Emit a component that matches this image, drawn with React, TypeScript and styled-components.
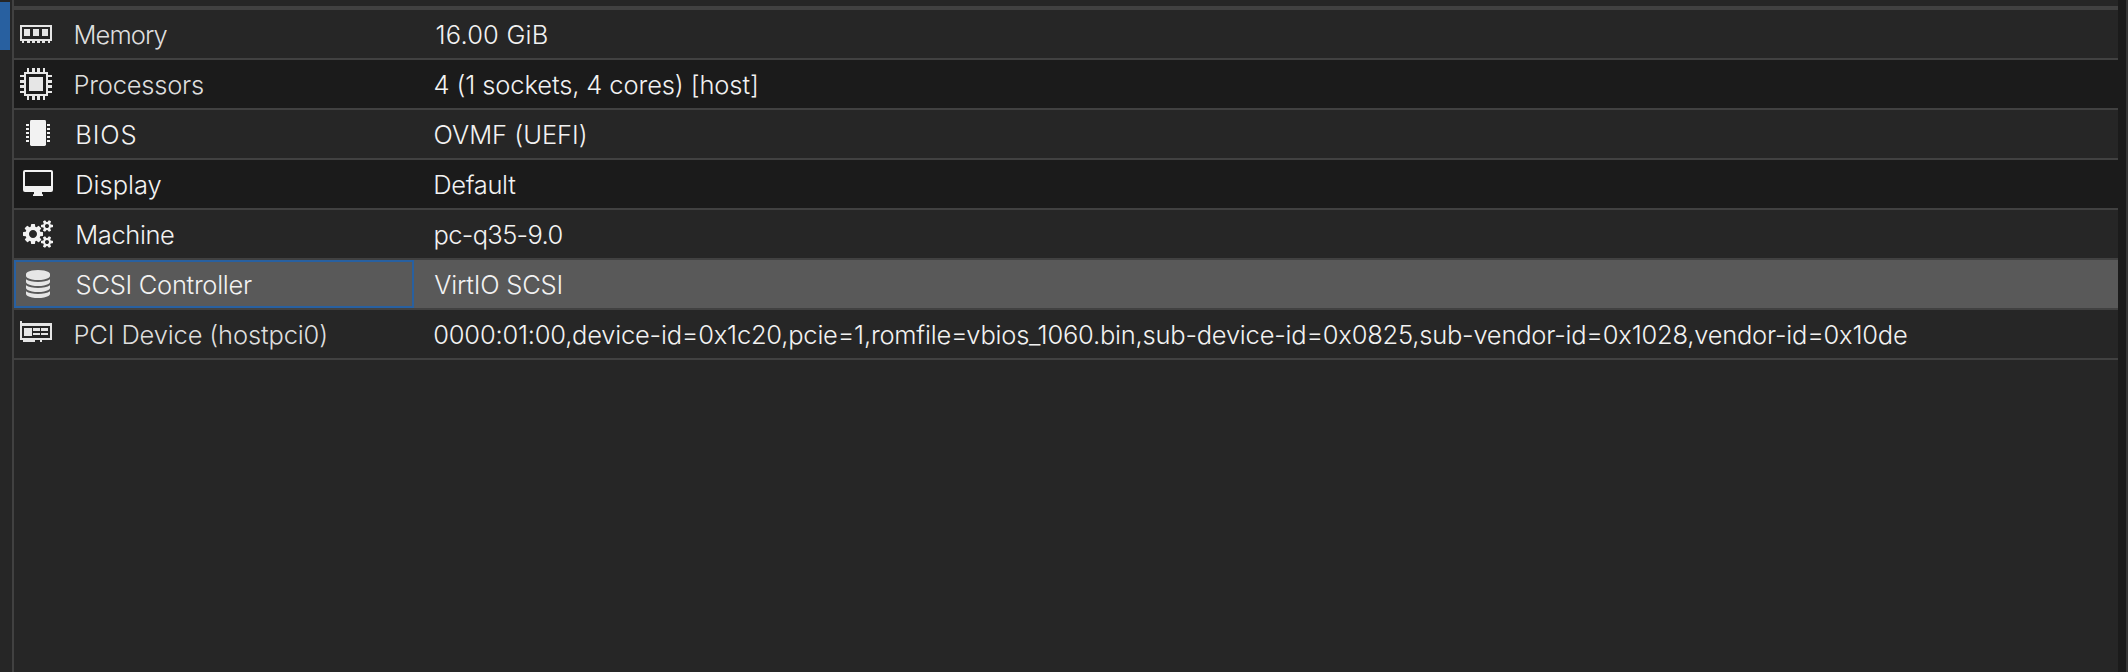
import React from 'react';
import styled, { createGlobalStyle } from 'styled-components';

const GlobalStyle = createGlobalStyle`
  * { box-sizing: border-box; }
  body {
    margin: 0;
    overflow: hidden;
    background: #262626;
    font-family: Inter, 'Liberation Sans', sans-serif;
  }
`;

const Screen = styled.div`
  display: flex;
  width: 2128px;
  height: 672px;
  background: #262626;
`;

const NavStrip = styled.div`
  flex: none;
  width: 12px;
  padding-top: 2px;
`;

const NavSelection = styled.div`
  width: 10px;
  height: 48px;
  background: #2860a0;
`;

const HardwarePanel = styled.main`
  flex: none;
  width: 2106px;
  border-left: 2px solid #414141;
`;

const HeaderEdge = styled.div`
  height: 10px;
  border-bottom: 4px solid #414141;
`;

const Gutter = styled.div`
  flex: 1;
  background: #1b1b1b;
  border-right: 2px solid #363636;
`;

const Row = styled.div<{ $tone: 'plain' | 'alt' | 'selected' }>`
  display: flex;
  height: 50px;
  border-bottom: 2px solid #414141;
  background: ${({ $tone }) =>
    $tone === 'selected' ? '#595959' : $tone === 'alt' ? '#1b1b1b' : '#262626'};
`;

const LabelCell = styled.div<{ $focused: boolean }>`
  display: flex;
  flex: none;
  width: 400px;
  height: 48px;
  box-shadow: ${({ $focused }) => ($focused ? 'inset 0 0 0 2px #2860a0' : 'none')};
`;

const IconBox = styled.svg<{ $bright: boolean }>`
  display: block;
  flex: none;
  width: 48px;
  height: 48px;
  fill: ${({ $bright }) => ($bright ? '#f2f2f2' : '#e6e6e6')};
`;

const Text = styled.span<{ $start: number; $track: number; $color: string }>`
  padding-top: 1px;
  padding-left: ${({ $start }) => $start}px;
  font-size: 25.5px;
  font-weight: 300;
  line-height: 48px;
  letter-spacing: ${({ $track }) => $track}px;
  font-feature-settings: 'calt' 0;
  white-space: nowrap;
  color: ${({ $color }) => $color};
`;

const MemoryIcon = (
  <g>
    <path fillRule="evenodd" d="M6 15h32v16H6zM8 17v12h28V17z" />
    <path d="M10 19h6v7h-6zM19 19h6v7h-6zM28 19h6v7h-6z" />
    <path d="M8 31h2v2H8zM13 31h3v2h-3zM18 31h3v2h-3zM23 31h3v2h-3zM28 31h3v2h-3zM34 31h2v2h-2z" />
  </g>
);

const CpuIcon = (
  <g>
    <path fillRule="evenodd" d="M10 12h24v24H10zM12 14v20h20V14z" />
    <path d="M15 17h14v14H15z" />
    <path d="M13 8h2v4h-2zM18 8h3v4h-3zM23 8h3v4h-3zM29 8h2v4h-2zM13 36h2v4h-2zM18 36h3v4h-3zM23 36h3v4h-3zM29 36h2v4h-2z" />
    <path d="M6 15h4v2H6zM6 20h4v3H6zM6 25h4v3H6zM6 31h4v2H6zM34 15h4v2h-4zM34 20h4v3h-4zM34 25h4v3h-4zM34 31h4v2h-4z" />
  </g>
);

const ChipIcon = (
  <g>
    <rect x="16" y="10" width="16" height="26" rx="1.4" />
    <path d="M12 14h3v2h-3zM12 18h3v2h-3zM12 22h3v2h-3zM12 26h3v2h-3zM12 30h3v2h-3zM33 14h3v2h-3zM33 18h3v2h-3zM33 22h3v2h-3zM33 26h3v2h-3zM33 30h3v2h-3z" />
  </g>
);

const DisplayIcon = (
  <path
    fillRule="evenodd"
    d="M11 10h26a2 2 0 0 1 2 2v18a2 2 0 0 1-2 2h-9v2l1 .6V36H19v-1.4l1-.6v-2h-9a2 2 0 0 1-2-2V12a2 2 0 0 1 2-2zM11 12v14h26V12z"
  />
);

const CogsIcon = (
  <path
    transform="translate(9 10) scale(.015625)"
    d="M896 896q0-106-75-181t-181-75-181 75-75 181 75 181 181 75 181-75 75-181zm768 512q0-52-38-90t-90-38-90 38-38 90q0 53 37.5 90.5t90.5 37.5 90.5-37.5 37.5-90.5zm0-1024q0-52-38-90t-90-38-90 38-38 90q0 53 37.5 90.5t90.5 37.5 90.5-37.5 37.5-90.5zm-384 421v185q0 10-7 19.5t-16 10.5l-155 24q-11 35-32 76 34 48 90 115 7 11 7 20 0 12-7 19-23 30-82.5 89.5t-78.5 59.5q-11 0-21-7l-115-90q-37 19-77 31-11 108-23 155-7 24-30 24h-186q-11 0-20-7.5t-10-17.5l-23-153q-34-10-75-31l-118 89q-7 7-20 7-11 0-21-8-144-133-144-160 0-9 7-19 10-14 41-53t47-61q-23-44-35-82l-152-24q-10-1-17-9.5t-7-19.5v-185q0-10 7-19.5t16-10.5l155-24q11-35 32-76-34-48-90-115-7-11-7-20 0-12 7-20 22-30 82-89t79-59q11 0 21 7l115 90q34-18 77-32 11-108 23-154 7-24 30-24h186q11 0 20 7.5t10 17.5l23 153q34 10 75 31l118-89q8-7 20-7 11 0 21 8 144 133 144 160 0 8-7 19-12 16-42 54t-45 60q23 48 34 82l152 23q10 2 17 10.5t7 19.5zm640 533v140q0 16-149 31-12 27-30 52 51 113 51 138 0 4-4 7-122 71-124 71-8 0-46-47t-52-68q-20 2-30 2t-30-2q-14 21-52 68t-46 47q-2 0-124-71-4-3-4-7 0-25 51-138-18-25-30-52-149-15-149-31v-140q0-16 149-31 13-29 30-52-51-113-51-138 0-4 4-7 4-2 35-20t59-34 30-16q8 0 46 46.5t52 67.5q20-2 30-2t30 2q51-71 92-112l6-2q4 0 124 70 4 3 4 7 0 25-51 138 17 23 30 52 149 15 149 31zm0-1024v140q0 16-149 31-12 27-30 52 51 113 51 138 0 4-4 7-122 71-124 71-8 0-46-47t-52-68q-20 2-30 2t-30-2q-14 21-52 68t-46 47q-2 0-124-71-4-3-4-7 0-25 51-138-18-25-30-52-149-15-149-31v-140q0-16 149-31 13-29 30-52-51-113-51-138 0-4 4-7 4-2 35-20t59-34 30-16q8 0 46 46.5t52 67.5q20-2 30-2t30 2q51-71 92-112l6-2q4 0 124 70 4 3 4 7 0 25-51 138 17 23 30 52 149 15 149 31z"
  />
);

const DatabaseIcon = (
  <path
    transform="translate(10 10) scale(.015625)"
    d="M896 768q237 0 443-43t325-127v170q0 69-103 128t-280 93.5-385 34.5-385-34.5-280-93.5-103-128v-170q119 84 325 127t443 43zm0 768q237 0 443-43t325-127v170q0 69-103 128t-280 93.5-385 34.5-385-34.5-280-93.5-103-128v-170q119 84 325 127t443 43zm0-384q237 0 443-43t325-127v170q0 69-103 128t-280 93.5-385 34.5-385-34.5-280-93.5-103-128v-170q119 84 325 127t443 43zm0-1152q208 0 385 34.5t280 93.5 103 128v128q0 69-103 128t-280 93.5-385 34.5-385-34.5-280-93.5-103-128v-128q0-69 103-128t280-93.5 385-34.5z"
  />
);

const PciIcon = (
  <g>
    <path fillRule="evenodd" d="M6 11h2v2h30v17H6zM8 16v12h28V16z" />
    <path d="M10 18h8v8h-8zM19 18h7v3h-7zM27 18h7v3h-7zM19 23h7v2h-7zM27 23h7v2h-7zM9 30h12v2H9zM26 30h2v2h-2z" />
  </g>
);

type Item = {
  icon: React.ReactNode;
  bright: boolean;
  label: string;
  labelStart: number;
  labelTrack: number;
  value: string;
  valueStart: number;
  valueTrack: number;
};

const items: Item[] = [
  { icon: MemoryIcon, bright: false, label: 'Memory', labelStart: 11.5, labelTrack: -0.92, value: '16.00 GiB', valueStart: 21.5, valueTrack: 0.2 },
  { icon: CpuIcon, bright: false, label: 'Processors', labelStart: 11.5, labelTrack: -0.22, value: '4 (1 sockets, 4 cores) [host]', valueStart: 19.5, valueTrack: -0.11 },
  { icon: ChipIcon, bright: true, label: 'BIOS', labelStart: 13.3, labelTrack: 0.9, value: 'OVMF (UEFI)', valueStart: 19.5, valueTrack: 0 },
  { icon: DisplayIcon, bright: true, label: 'Display', labelStart: 13.3, labelTrack: -0.03, value: 'Default', valueStart: 19.3, valueTrack: -0.35 },
  { icon: CogsIcon, bright: true, label: 'Machine', labelStart: 13.3, labelTrack: -0.41, value: 'pc-q35-9.0', valueStart: 19.5, valueTrack: -0.66 },
  { icon: DatabaseIcon, bright: false, label: 'SCSI Controller', labelStart: 13.6, labelTrack: -0.29, value: 'VirtIO SCSI', valueStart: 20.2, valueTrack: -0.2 },
  {
    icon: PciIcon,
    bright: false,
    label: 'PCI Device (hostpci0)',
    labelStart: 11.5,
    labelTrack: -0.14,
    value:
      '0000:01:00,device-id=0x1c20,pcie=1,romfile=vbios_1060.bin,sub-device-id=0x0825,sub-vendor-id=0x1028,vendor-id=0x10de',
    valueStart: 19.3,
    valueTrack: -0.22,
  },
];

const SELECTED = 'SCSI Controller';

export default function App() {
  return (
    <Screen>
      <GlobalStyle />
      <NavStrip>
        <NavSelection />
      </NavStrip>
      <HardwarePanel>
        <HeaderEdge />
        {items.map((item, i) => {
          const selected = item.label === SELECTED;
          const dim = !item.bright && !selected;
          return (
            <Row key={item.label} $tone={selected ? 'selected' : i % 2 ? 'alt' : 'plain'}>
              <LabelCell $focused={selected}>
                <IconBox viewBox="0 0 48 48" $bright={item.bright}>
                  {item.icon}
                </IconBox>
                <Text $start={item.labelStart} $track={item.labelTrack} $color={dim ? '#dedede' : '#f2f2f2'}>
                  {item.label}
                </Text>
              </LabelCell>
              <Text $start={item.valueStart} $track={item.valueTrack} $color="#f2f2f2">
                {item.value}
              </Text>
            </Row>
          );
        })}
      </HardwarePanel>
      <Gutter />
    </Screen>
  );
}
